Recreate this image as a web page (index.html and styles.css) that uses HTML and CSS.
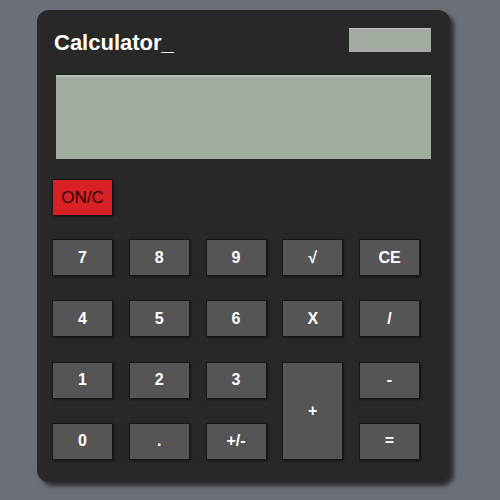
FILE: index.html
```html
<!DOCTYPE html>
<html>
<head>
<meta charset="utf-8">
<link rel="stylesheet" href="styles.css">
</head>
<body>
<div class="calc">
  <div class="top">
    <div class="title">Calculator_</div>
    <div class="mini"></div>
  </div>
  <div class="screen"></div>
  <div class="onrow"><button class="key on">ON/C</button></div>
  <div class="keys">
    <button class="key">7</button>
    <button class="key">8</button>
    <button class="key">9</button>
    <button class="key">√</button>
    <button class="key">CE</button>
    <button class="key">4</button>
    <button class="key">5</button>
    <button class="key">6</button>
    <button class="key">X</button>
    <button class="key">/</button>
    <button class="key">1</button>
    <button class="key">2</button>
    <button class="key">3</button>
    <button class="key plus">+</button>
    <button class="key">-</button>
    <button class="key">0</button>
    <button class="key">.</button>
    <button class="key">+/-</button>
    <button class="key">=</button>
  </div>
</div>
</body>
</html>
```
FILE: styles.css
```css
html, body {
  margin: 0;
  padding: 0;
  background: #6b7078;
  height: 100%;
}
body {
  padding: 10px 0 0 37px;
  box-sizing: border-box;
}
.calc {
  width: 413px;
  height: 472px;
  box-sizing: border-box;
  background: #282828;
  border-radius: 12px;
  box-shadow: 4px 4px 4px rgba(0, 0, 0, 0.6);
  padding: 18px 19px 0 15px;
  font-family: "Liberation Sans", Arial, sans-serif;
}
.top {
  display: flex;
  justify-content: space-between;
  align-items: flex-start;
  height: 47px;
}
.title {
  color: #ffffff;
  font-size: 22px;
  font-weight: bold;
  line-height: 24px;
  padding-left: 2px;
  margin-top: 3px;
}
.mini {
  width: 82px;
  height: 23px;
  background: #a3aca0;
  border-top: 1px solid #b8bfb5;
}
.screen {
  margin-left: 4px;
  height: 82px;
  background: #a3aca0;
  border-top: 2px solid #bcc3b9;
  box-shadow: 0 -1px 0 #1c1c1c;
}
.onrow {
  margin-top: 20px;
  height: 37px;
}
.keys {
  margin-top: 23px;
  display: grid;
  grid-template-columns: repeat(5, 61px);
  grid-template-rows: repeat(4, 37px);
  column-gap: 15.75px;
  row-gap: 24.3px;
}
.key {
  margin: 0;
  padding: 0;
  background: #555555;
  border: 1px solid #161616;
  box-shadow: 1px 1px 2px rgba(0, 0, 0, 0.5);
  color: #ffffff;
  font-family: "Liberation Sans", Arial, sans-serif;
  font-size: 16px;
  font-weight: bold;
  width: 61px;
  height: 37px;
  box-sizing: border-box;
  display: flex;
  align-items: center;
  justify-content: center;
}
.on {
  background: #d92024;
  color: #2a0404;
  font-weight: normal;
  font-size: 17px;
}
.plus {
  grid-column: 4;
  grid-row: 3 / span 2;
  height: auto;
}
```
